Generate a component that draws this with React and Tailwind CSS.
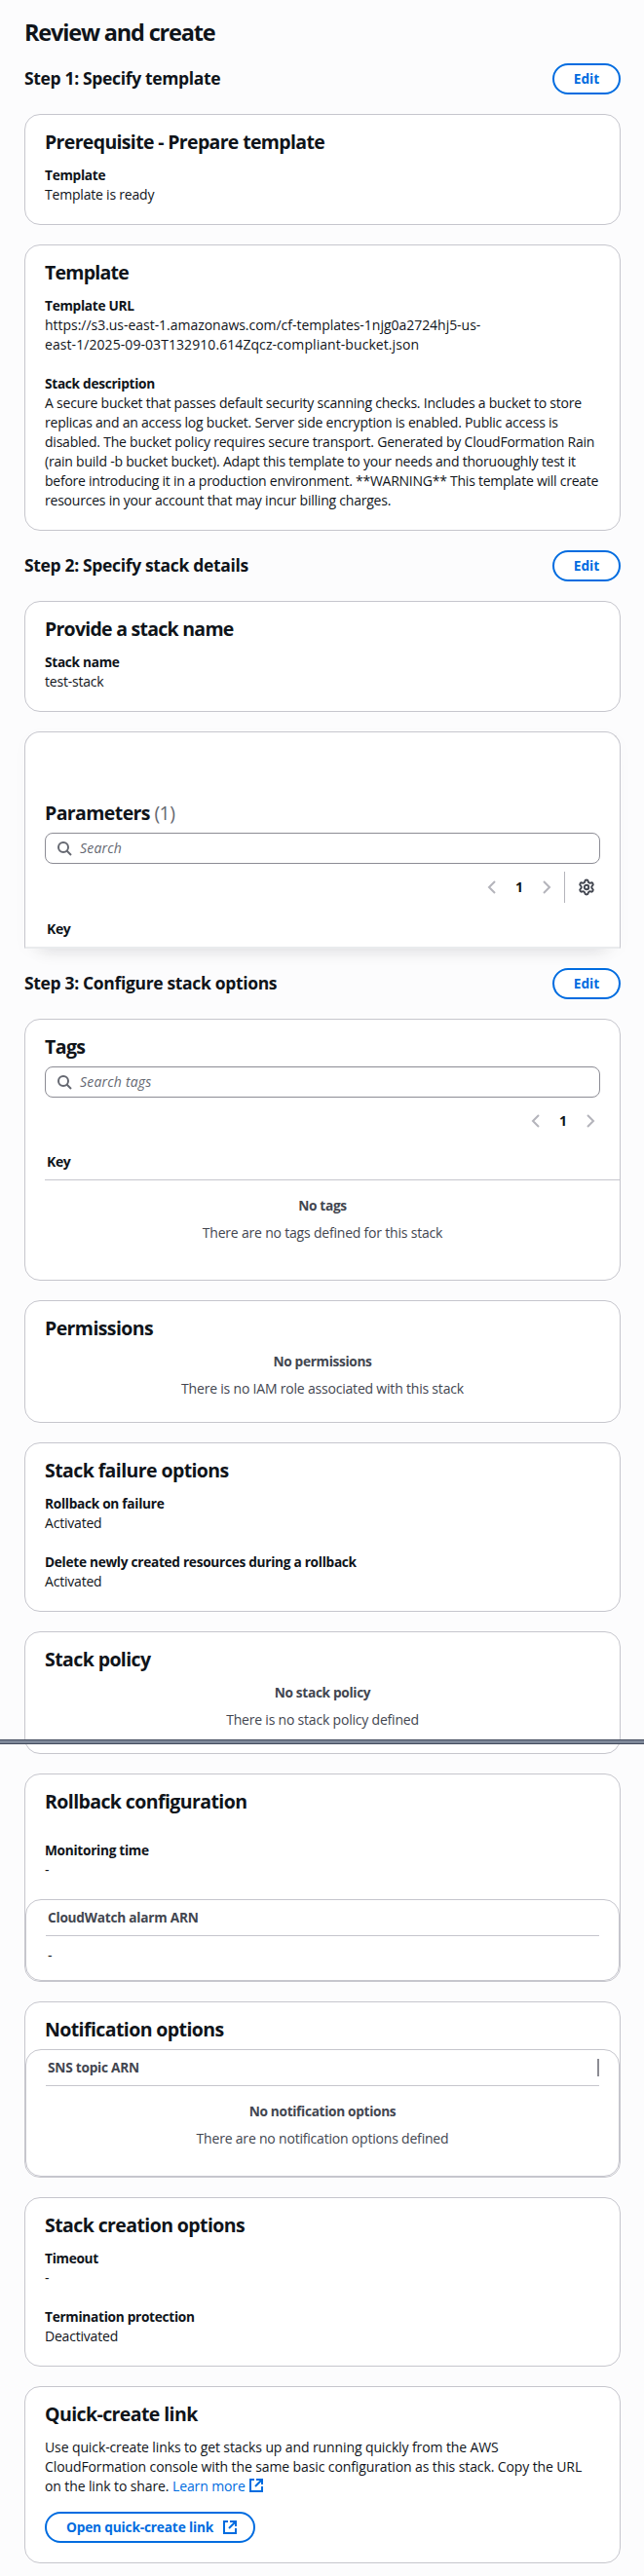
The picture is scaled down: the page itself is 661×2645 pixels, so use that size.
import React from "react";
import { Settings } from "lucide-react";

const SearchIcon = () => (
  <svg width="16" height="16" viewBox="0 0 16 16" fill="none" stroke="#656871" strokeWidth="2" className="shrink-0">
    <circle cx="7" cy="7" r="5" />
    <path d="m15 15-4.500-4.500" />
  </svg>
);

const Chevron = ({ right }) => (
  <svg width="16" height="16" viewBox="0 0 16 16" fill="none" stroke="#b4b4bb" strokeWidth="2" className="shrink-0">
    <path d={right ? "m5 2 6 6-6 6" : "M11 2 5 8l6 6"} />
  </svg>
);

const ExternalIcon = ({ className = "" }) => (
  <svg width="16" height="16" viewBox="0 0 16 16" fill="none" stroke="#006ce0" strokeWidth="2" className={className}>
    <path d="M6 2H2v12h12V9" />
    <path d="M8 2h6v5" />
    <path d="M14 2 7 9" />
  </svg>
);

const Title = ({ children, tracking = "tracking-[-0.59px]" }) => (
  <h3 className={`mt-px text-[19.5px] leading-6 font-bold whitespace-nowrap ${tracking}`}>{children}</h3>
);

const Card = ({ title, tracking, height, className = "pt-[15px]", children }) => (
  <section className={`flex shrink-0 flex-col rounded-2xl border border-[#c6c6cd] bg-white px-5 ${height} ${className}`}>
    <Title tracking={tracking}>{title}</Title>
    {children}
  </section>
);

const Field = ({ label, children, className = "mt-3" }) => (
  <div className={`whitespace-nowrap ${className}`}>
    <div className="text-[13.7px] font-bold tracking-[-0.3px]">{label}</div>
    <div>{children}</div>
  </div>
);

const Step = ({ children }) => (
  <div className="flex h-8 shrink-0 items-center justify-between">
    <h2 className="pb-[2px] text-[17.5px] font-bold tracking-[-0.34px]">{children}</h2>
    <button className="h-8 w-[70px] rounded-[20px] border-2 border-[#006ce0] bg-white text-[13.7px] font-bold tracking-normal text-[#006ce0]">
      Edit
    </button>
  </div>
);

const Empty = ({ title, text, className = "mt-3" }) => (
  <div className={`flex flex-col items-center gap-2 text-[#424650] ${className}`}>
    <p className="text-[13.7px] font-bold tracking-[-0.33px]">{title}</p>
    <p>{text}</p>
  </div>
);

const SearchBox = ({ text }) => (
  <div className="mt-2 flex h-8 shrink-0 items-center gap-2 rounded-lg border border-[#8c8c94] px-[11px] tracking-[0.2px] text-[#656871] italic">
    <SearchIcon />
    <span>{text}</span>
  </div>
);

const Pages = () => (
  <div className="flex items-center">
    <Chevron />
    <span className="w-10 text-center font-bold">1</span>
    <Chevron right />
  </div>
);

const InnerTable = ({ heading, height, handle, className, children }) => (
  <div className={`-mx-5 flex flex-col rounded-2xl border border-[#c6c6cd] px-5 pt-2 ${height} ${className}`}>
    <div className="flex h-[29px] shrink-0 justify-between border-b border-[#c6c6cd] pl-[2px] text-[13.7px] font-bold tracking-[-0.25px] text-[#424650]">
      <span>{heading}</span>
      {handle && <span className="mt-px h-[18px] w-[2px] bg-[#8c8c94]" />}
    </div>
    {children}
  </div>
);

export default function App() {
  return (
    <main className="relative flex h-[2645px] w-[661px] flex-col gap-5 overflow-hidden bg-[#fcfcfd] pt-[18px] pr-6 pl-[25px] font-['Open_Sans',sans-serif] text-[14px] leading-5 tracking-[-0.2px] text-[#0f141a]">
      <h1 className="-mb-[3px] shrink-0 text-[23.5px] leading-[30px] font-bold tracking-[-1.18px]">Review and create</h1>

      <Step>Step 1: Specify template</Step>
      <Card title="Prerequisite - Prepare template" tracking="tracking-[-0.66px]" height="h-[114px]">
        <Field label="Template">Template is ready</Field>
      </Card>
      <Card title="Template" tracking="tracking-[-0.74px]" height="h-[294px]">
        <Field label="Template URL">
          <span className="tracking-[-0.03px]">https://s3.us-east-1.amazonaws.com/cf-templates-1njg0a2724hj5-us-</span>
          <br />
          <span className="tracking-[0.07px]">east-1/2025-09-03T132910.614Zqcz-compliant-bucket.json</span>
        </Field>
        <Field label="Stack description" className="mt-5">
          <span className="tracking-[-0.22px]">
            A secure bucket that passes default security scanning checks. Includes a bucket to store
            <br />
            replicas and an access log bucket. Server side encryption is enabled. Public access is
            <br />
            disabled. The bucket policy requires secure transport. Generated by CloudFormation Rain
            <br />
            (rain build -b bucket bucket). Adapt this template to your needs and thoruoughly test it
            <br />
            <span className="tracking-[-0.25px]">
              before introducing it in a production environment. **WARNING** This template will create
            </span>
            <br />
            resources in your account that may incur billing charges.
          </span>
        </Field>
      </Card>

      <Step>Step 2: Specify stack details</Step>
      <Card title="Provide a stack name" tracking="tracking-[-0.74px]" height="h-[114px]">
        <Field label="Stack name">test-stack</Field>
      </Card>
      <section className="flex h-[223px] shrink-0 flex-col rounded-t-2xl border border-b-2 border-[#c6c6cd] border-b-[#e9ebed] bg-white px-5 pt-[70px] shadow-[0_18px_16px_-16px_rgba(0,7,22,0.12),0_4px_20px_rgba(0,7,22,0.02)]">
        <Title>
          Parameters <span className="font-normal text-[#656871]">(1)</span>
        </Title>
        <SearchBox text="Search" />
        <div className="mt-2 flex h-8 shrink-0 items-center justify-end pr-[5px]">
          <Pages />
          <span className="ml-[10px] h-8 w-px bg-[#b4b4bb]" />
          <Settings size={18} strokeWidth={2.6} className="ml-[13px] text-[#424650]" />
        </div>
        <div className="mt-[17px] pl-[2px] font-bold tracking-[-0.4px]">Key</div>
      </section>

      <Step>Step 3: Configure stack options</Step>
      <Card title="Tags" height="h-[269px]">
        <SearchBox text="Search tags" />
        <div className="mt-2 flex h-8 shrink-0 items-center justify-end pr-[2px]">
          <Pages />
        </div>
        <div className="mt-4 -mr-5 border-b border-[#c6c6cd] pb-2 pl-[2px] font-bold tracking-[-0.4px]">Key</div>
        <Empty title="No tags" text="There are no tags defined for this stack" className="mt-4" />
      </Card>
      <Card title="Permissions" height="h-[126px]">
        <Empty title="No permissions" text="There is no IAM role associated with this stack" />
      </Card>
      <Card title="Stack failure options" height="h-[174px]">
        <Field label="Rollback on failure">Activated</Field>
        <Field label="Delete newly created resources during a rollback" className="mt-5">
          Activated
        </Field>
      </Card>
      <Card title="Stack policy" height="h-[126px]">
        <Empty title="No stack policy" text="There is no stack policy defined" />
      </Card>
      <Card title="Rollback configuration" height="h-[214px]">
        <Field label="Monitoring time" className="mt-7">
          -
        </Field>
        <InnerTable heading="CloudWatch alarm ARN" height="h-[84px]" className="mt-5">
          <div className="mt-[10px] pl-[2px]">-</div>
        </InnerTable>
      </Card>
      <Card title="Notification options" height="h-[181px]">
        <InnerTable heading="SNS topic ARN" height="h-[131px]" className="mt-2" handle>
          <Empty title="No notification options" text="There are no notification options defined" className="mt-4" />
        </InnerTable>
      </Card>
      <Card title="Stack creation options" height="h-[174px]">
        <Field label="Timeout">-</Field>
        <Field label="Termination protection" className="mt-5">
          Deactivated
        </Field>
      </Card>
      <Card title="Quick-create link" height="h-[182px]">
        <p className="mt-3 tracking-[-0.11px] whitespace-nowrap">
          Use quick-create links to get stacks up and running quickly from the AWS
          <br />
          CloudFormation console with the same basic configuration as this stack. Copy the URL
          <br />
          on the link to share. <a className="text-[#006ce0]">Learn more</a>
          <ExternalIcon className="ml-[3px] inline-block align-[-2px]" />
        </p>
        <button className="mt-4 flex h-8 w-[216px] shrink-0 items-center gap-[9px] rounded-[20px] border-2 border-[#006ce0] bg-white pl-5 text-[13.7px] font-bold tracking-[-0.18px] whitespace-nowrap text-[#006ce0]">
          Open quick-create link
          <ExternalIcon className="shrink-0" />
        </button>
      </Card>

      <div className="absolute top-[1786px] left-0 h-[5px] w-full border-y border-[#424a5c] bg-[#7d8798]" />
    </main>
  );
}
